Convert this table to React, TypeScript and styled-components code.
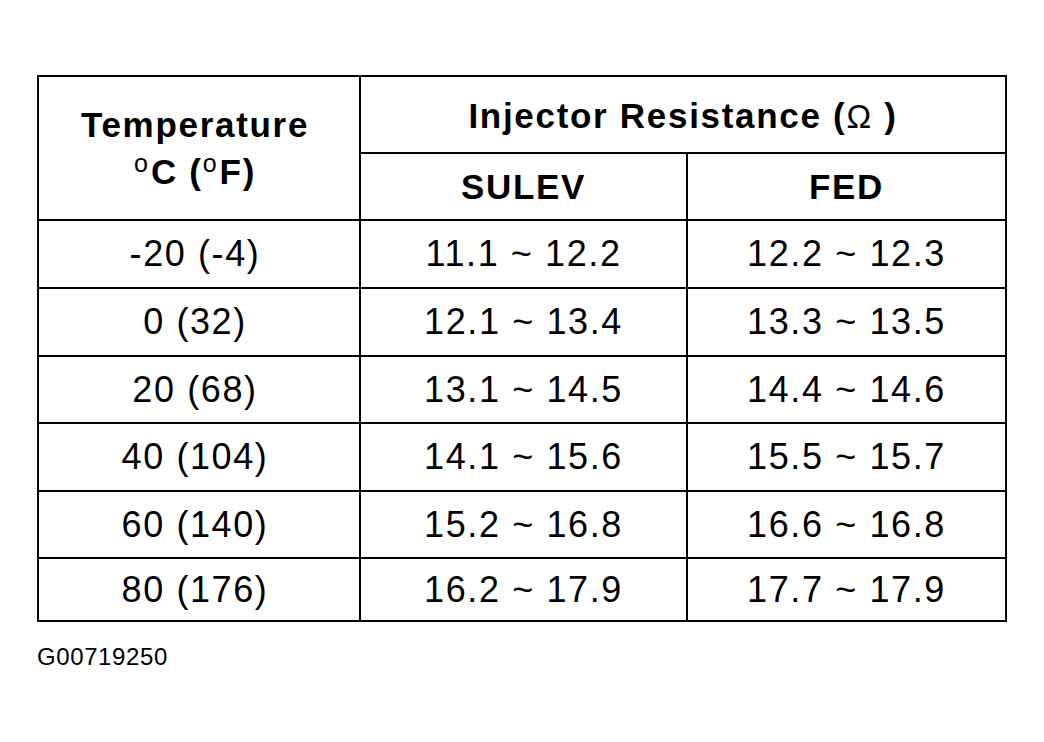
import React from 'react';
import styled, { createGlobalStyle } from 'styled-components';

const GlobalStyle = createGlobalStyle`
    html, body {
        margin: 0;
        padding: 0;
        background: #ffffff;
    }
    body {
        font-family: "Liberation Sans", Arial, sans-serif;
        color: #000000;
    }
`;

const Page = styled.div`
    display: flex;
    flex-direction: column;
    align-items: flex-start;
    padding: 75px 0 0 37px;
    width: 1044px;
    height: 742px;
    box-sizing: border-box;
`;

const Table = styled.div`
    display: grid;
    grid-template-columns: 320px 325px 317px;
    grid-template-rows: 75px 65px 66px 66px 65px 66px 65px 61px;
    gap: 2px;
    padding: 2px;
    background: #000000;
`;

const Cell = styled.div<{ $bold?: boolean; $rowSpan?: number; $colSpan?: number; $first?: boolean }>`
    display: flex;
    flex-direction: column;
    align-items: center;
    justify-content: center;
    background: #ffffff;
    text-align: center;
    white-space: pre;
    font-size: ${(p) => (p.$bold ? '35px' : '36px')};
    font-weight: ${(p) => (p.$bold ? 700 : 400)};
    letter-spacing: ${(p) => (p.$bold ? '1.7px' : '1.6px')};
    padding-right: ${(p) => (p.$first ? '8px' : '0')};
    grid-row: ${(p) => (p.$rowSpan ? `span ${p.$rowSpan}` : 'auto')};
    grid-column: ${(p) => (p.$colSpan ? `span ${p.$colSpan}` : 'auto')};
`;

const HeadBlock = styled.div`
    padding-top: 4px;
`;

const HeadLine = styled.div`
    line-height: 47px;
`;

const TitleLine = styled.div`
    padding-top: 3px;
`;

const Deg = styled.span`
    font-size: 25px;
    font-weight: 400;
    position: relative;
    top: -12px;
    letter-spacing: 0;
    margin-right: 3px;
`;

const Omega = styled.span`
    font-weight: 400;
    font-size: 33px;
`;

const Caption = styled.div`
    margin-top: 21px;
    font-size: 24px;
    letter-spacing: 0.6px;
`;

const rows: [string, string, string][] = [
    ['-20 (-4)', '11.1 ~ 12.2', '12.2 ~ 12.3'],
    ['0 (32)', '12.1 ~ 13.4', '13.3 ~ 13.5'],
    ['20 (68)', '13.1 ~ 14.5', '14.4 ~ 14.6'],
    ['40 (104)', '14.1 ~ 15.6', '15.5 ~ 15.7'],
    ['60 (140)', '15.2 ~ 16.8', '16.6 ~ 16.8'],
    ['80 (176)', '16.2 ~ 17.9', '17.7 ~ 17.9'],
];

export default function App(): JSX.Element {
    return (
        <Page>
            <GlobalStyle />
            <Table>
                <Cell $bold $first $rowSpan={2}>
                    <HeadBlock>
                        <HeadLine>Temperature</HeadLine>
                        <HeadLine><Deg>o</Deg>C (<Deg>o</Deg>F)</HeadLine>
                    </HeadBlock>
                </Cell>
                <Cell $bold $colSpan={2}>
                    <TitleLine>Injector Resistance (<Omega>Ω</Omega> )</TitleLine>
                </Cell>
                <Cell $bold>SULEV</Cell>
                <Cell $bold>FED</Cell>
                {rows.map((r) => (
                    <React.Fragment key={r[0]}>
                        <Cell $first>{r[0]}</Cell>
                        <Cell>{r[1]}</Cell>
                        <Cell>{r[2]}</Cell>
                    </React.Fragment>
                ))}
            </Table>
            <Caption>G00719250</Caption>
        </Page>
    );
}
